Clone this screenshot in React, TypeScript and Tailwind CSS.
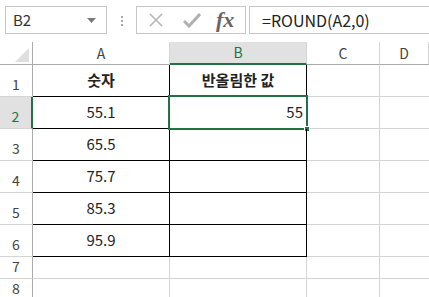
import React from 'react'

const cols = ['A', 'B', 'C', 'D']
const values = ['55.1', '65.5', '75.7', '85.3', '95.9']

const ko = { fontFamily: '"Malgun Gothic", "Noto Sans CJK KR", "Noto Sans", sans-serif' }

const App: React.FC = () => {
    const rowH = (r: number) => (r <= 6 ? 'h-[32px]' : 'h-[22px]')

    return (
        <div className="w-[429px] h-[297px] overflow-hidden bg-white text-[#222]" style={ko}>
            {/* Formula bar */}
            <div className="flex items-start h-[42px] pt-[6px]">
                <div className="ml-[5px] w-[102px] h-[28px] border border-[#c6c6c6] flex items-center justify-between pl-[7px] pr-[10px]">
                    <span className="text-[15px] text-[#333]">B2</span>
                    <svg width="9" height="5" viewBox="0 0 9 5"><path d="M0 0h9L4.5 5z" fill="#7a7a7a" /></svg>
                </div>
                <div className="ml-[14px] mt-[10px] flex flex-col gap-[2px]">
                    <span className="w-[2px] h-[2px] bg-[#a8a8a8]" />
                    <span className="w-[2px] h-[2px] bg-[#a8a8a8]" />
                    <span className="w-[2px] h-[2px] bg-[#a8a8a8]" />
                </div>
                <div className="ml-[13px] w-[110px] h-[28px] border border-[#c6c6c6] flex items-center">
                    <svg className="ml-[11px]" width="16" height="16" viewBox="0 0 16 16">
                        <path d="M2 2L14 14M14 2L2 14" stroke="#b5b5b5" strokeWidth="1.6" />
                    </svg>
                    <svg className="ml-[19px]" width="18" height="16" viewBox="0 0 18 16">
                        <path d="M1 9l5 5L17 2" stroke="#b0b0b0" strokeWidth="3" fill="none" />
                    </svg>
                    <span className="ml-[15px] text-[22px] italic font-bold text-[#666] leading-none" style={{ fontFamily: '"Liberation Serif", serif' }}>fx</span>
                </div>
                <div className="ml-[3px] flex-1 h-[28px] border border-r-0 border-[#c6c6c6] flex items-center pl-[12px]">
                    <span className="text-[16px] text-[#222]">=ROUND(A2,0)</span>
                </div>
            </div>

            {/* Sheet */}
            <div className="grid grid-cols-[33px_137px_137px_73px_1fr]">
                {/* Column headers */}
                <div className="h-[23px] border-r border-b border-[#ababab] flex items-end justify-end pr-[3px] pb-[2px]">
                    <svg width="14" height="14" viewBox="0 0 14 14"><path d="M14 0V14H0z" fill="#dfdfdf" /></svg>
                </div>
                {cols.map((c) => (
                    <div
                        key={c}
                        className={`h-[23px] flex items-center justify-center text-[14px] border-r border-[#d4d4d4] ${c === 'B' ? 'bg-[#e1e1e1] text-[#217346] border-b-2 border-b-[#217346]' : 'text-[#444] border-b border-b-[#ababab]'}`}
                    >
                        {c}
                    </div>
                ))}

                {[1, 2, 3, 4, 5, 6, 7, 8].map((r) => {
                    const inTable = r <= 6
                    const dark = inTable ? 'border-[#000]' : 'border-[#d4d4d4]'
                    return (
                        <React.Fragment key={r}>
                            <div
                                className={`${rowH(r)} flex items-end justify-center pb-[1px] text-[14px] border-b border-[#d4d4d4] ${r === 2 ? 'bg-[#e1e1e1] text-[#217346] border-r-2 border-r-[#217346]' : 'text-[#444] border-r border-r-[#ababab]'}`}
                            >
                                {r}
                            </div>
                            <div className={`${rowH(r)} flex items-center justify-center text-[15px] border-r border-b ${dark} ${r === 1 ? 'font-bold' : ''}`}>
                                {r === 1 ? '숫자' : inTable ? values[r - 2] : ''}
                            </div>
                            <div className={`relative ${rowH(r)} flex items-center text-[15px] border-r border-b ${dark} ${r === 1 ? 'justify-center font-bold' : 'justify-end pr-[3px]'}`}>
                                {r === 1 ? '반올림한 값' : r === 2 ? '55' : ''}
                                {r === 2 && (
                                    <div className="absolute -left-[2px] -top-[2px] w-[140px] h-[35px] border-2 border-[#217346]">
                                        <span className="absolute -right-[4px] -bottom-[4px] w-[6px] h-[6px] bg-[#217346] border border-white" />
                                    </div>
                                )}
                            </div>
                            <div className={`${rowH(r)} border-r border-b border-[#d4d4d4]`} />
                            <div className={`${rowH(r)} border-b border-[#d4d4d4]`} />
                        </React.Fragment>
                    )
                })}
            </div>
        </div>
    )
}

export default App
